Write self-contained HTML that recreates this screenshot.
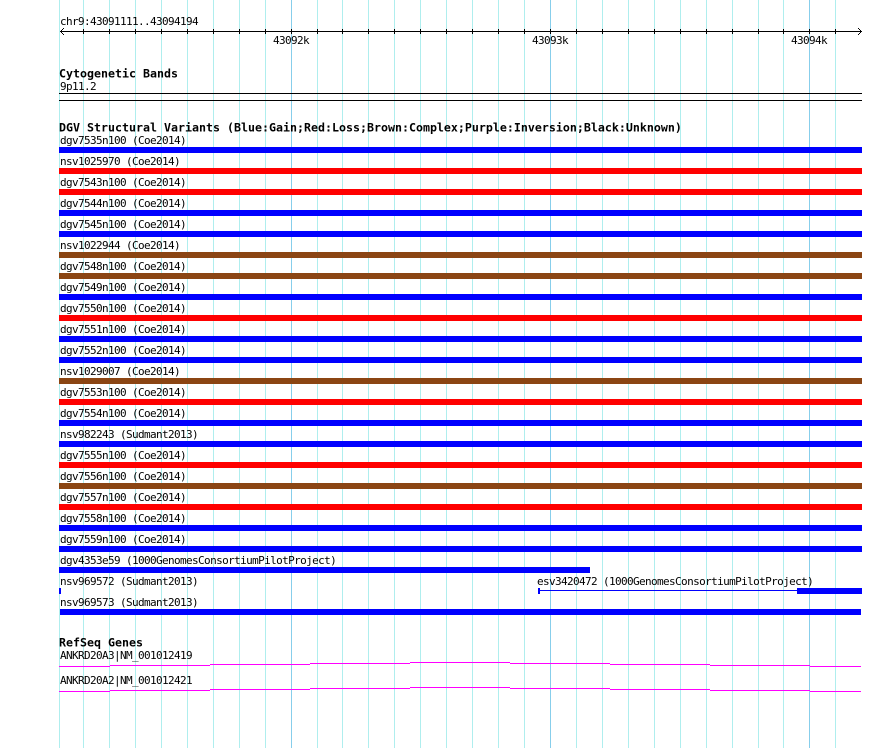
<!DOCTYPE html>
<html>
<head>
<meta charset="utf-8">
<style>
html,body{margin:0;padding:0;background:#fff;width:890px;height:748px;overflow:hidden}
svg{display:block}
text{font-family:"DejaVu Sans Mono","Liberation Mono",monospace;font-size:11px;letter-spacing:-0.62px;fill:#000;white-space:pre}
text.b{font-weight:bold;font-size:11.63px;letter-spacing:0}
</style>
</head>
<body>
<svg width="890" height="748" viewBox="0 0 890 748" xmlns="http://www.w3.org/2000/svg">
<g shape-rendering="crispEdges">
<g fill="#afeeee">
<rect x="59" y="0" width="1" height="748"/><rect x="83" y="0" width="1" height="748"/><rect x="109" y="0" width="1" height="748"/><rect x="135" y="0" width="1" height="748"/><rect x="161" y="0" width="1" height="748"/><rect x="187" y="0" width="1" height="748"/><rect x="213" y="0" width="1" height="748"/><rect x="239" y="0" width="1" height="748"/><rect x="265" y="0" width="1" height="748"/>
<rect x="317" y="0" width="1" height="748"/><rect x="342" y="0" width="1" height="748"/><rect x="368" y="0" width="1" height="748"/><rect x="394" y="0" width="1" height="748"/><rect x="420" y="0" width="1" height="748"/><rect x="446" y="0" width="1" height="748"/><rect x="472" y="0" width="1" height="748"/><rect x="498" y="0" width="1" height="748"/><rect x="524" y="0" width="1" height="748"/>
<rect x="576" y="0" width="1" height="748"/><rect x="602" y="0" width="1" height="748"/><rect x="628" y="0" width="1" height="748"/><rect x="654" y="0" width="1" height="748"/><rect x="680" y="0" width="1" height="748"/><rect x="706" y="0" width="1" height="748"/><rect x="732" y="0" width="1" height="748"/><rect x="758" y="0" width="1" height="748"/><rect x="783" y="0" width="1" height="748"/><rect x="835" y="0" width="1" height="748"/>
</g>
<g fill="#87ceeb">
<rect x="291" y="0" width="1" height="748"/><rect x="550" y="0" width="1" height="748"/><rect x="809" y="0" width="1" height="748"/>
</g>
<g fill="#000">
<rect x="60" y="31" width="802" height="1"/>
<rect x="83" y="29" width="1" height="5"/><rect x="109" y="29" width="1" height="5"/><rect x="135" y="29" width="1" height="5"/><rect x="161" y="29" width="1" height="5"/><rect x="187" y="29" width="1" height="5"/><rect x="213" y="29" width="1" height="5"/><rect x="239" y="29" width="1" height="5"/><rect x="265" y="29" width="1" height="5"/><rect x="291" y="29" width="1" height="5"/><rect x="317" y="29" width="1" height="5"/><rect x="342" y="29" width="1" height="5"/><rect x="368" y="29" width="1" height="5"/><rect x="394" y="29" width="1" height="5"/><rect x="420" y="29" width="1" height="5"/><rect x="446" y="29" width="1" height="5"/><rect x="472" y="29" width="1" height="5"/><rect x="498" y="29" width="1" height="5"/><rect x="524" y="29" width="1" height="5"/><rect x="550" y="29" width="1" height="5"/><rect x="576" y="29" width="1" height="5"/><rect x="602" y="29" width="1" height="5"/><rect x="628" y="29" width="1" height="5"/><rect x="654" y="29" width="1" height="5"/><rect x="680" y="29" width="1" height="5"/><rect x="706" y="29" width="1" height="5"/><rect x="732" y="29" width="1" height="5"/><rect x="758" y="29" width="1" height="5"/><rect x="783" y="29" width="1" height="5"/><rect x="809" y="29" width="1" height="5"/><rect x="835" y="29" width="1" height="5"/>
<rect x="59" y="93" width="803" height="1"/><rect x="59" y="100" width="803" height="1"/>
</g>
<!-- arrowheads -->
<g fill="#000">
<rect x="61" y="30" width="1" height="1"/><rect x="61" y="32" width="1" height="1"/><rect x="62" y="29" width="1" height="1"/><rect x="62" y="33" width="1" height="1"/><rect x="63" y="28" width="1" height="1"/><rect x="63" y="34" width="1" height="1"/>
<rect x="860" y="30" width="1" height="1"/><rect x="860" y="32" width="1" height="1"/><rect x="859" y="29" width="1" height="1"/><rect x="859" y="33" width="1" height="1"/><rect x="858" y="28" width="1" height="1"/><rect x="858" y="34" width="1" height="1"/>
</g>
<!-- bars -->
<g fill="#0000ff">
<rect x="59" y="147" width="803" height="6"/><rect x="59" y="210" width="803" height="6"/><rect x="59" y="231" width="803" height="6"/><rect x="59" y="294" width="803" height="6"/><rect x="59" y="336" width="803" height="6"/><rect x="59" y="357" width="803" height="6"/><rect x="59" y="420" width="803" height="6"/><rect x="59" y="441" width="803" height="6"/><rect x="59" y="525" width="803" height="6"/><rect x="59" y="546" width="803" height="6"/>
<rect x="59" y="567" width="531" height="6"/>
<rect x="59" y="588" width="2" height="6"/>
<rect x="538" y="588" width="2" height="6"/><rect x="540" y="590" width="257" height="1"/><rect x="797" y="588" width="65" height="6"/>
<rect x="60" y="609" width="801" height="6"/>
</g>
<g fill="#ff0000">
<rect x="59" y="168" width="803" height="6"/><rect x="59" y="189" width="803" height="6"/><rect x="59" y="315" width="803" height="6"/><rect x="59" y="399" width="803" height="6"/><rect x="59" y="462" width="803" height="6"/><rect x="59" y="504" width="803" height="6"/>
</g>
<g fill="#8b4513">
<rect x="59" y="252" width="803" height="6"/><rect x="59" y="273" width="803" height="6"/><rect x="59" y="378" width="803" height="6"/><rect x="59" y="483" width="803" height="6"/>
</g>
<!-- genes -->
<g fill="#ff00ff">
<rect x="59" y="666" width="51" height="1"/><rect x="110" y="665" width="100" height="1"/><rect x="210" y="664" width="100" height="1"/><rect x="310" y="663" width="100" height="1"/><rect x="410" y="662" width="100" height="1"/><rect x="510" y="663" width="100" height="1"/><rect x="610" y="664" width="100" height="1"/><rect x="710" y="665" width="100" height="1"/><rect x="810" y="666" width="51" height="1"/>
<rect x="59" y="691" width="51" height="1"/><rect x="110" y="690" width="100" height="1"/><rect x="210" y="689" width="100" height="1"/><rect x="310" y="688" width="100" height="1"/><rect x="410" y="687" width="100" height="1"/><rect x="510" y="688" width="100" height="1"/><rect x="610" y="689" width="100" height="1"/><rect x="710" y="690" width="100" height="1"/><rect x="810" y="691" width="51" height="1"/>
</g>
</g>
<text x="60" y="25">chr9:43091111..43094194</text>
<text x="273" y="44">43092k</text>
<text x="532" y="44">43093k</text>
<text x="791" y="44">43094k</text>
<text class="b" x="59" y="77.5">Cytogenetic Bands</text>
<text x="60" y="90">9p11.2</text>
<text class="b" x="59" y="131.5">DGV Structural Variants (Blue:Gain;Red:Loss;Brown:Complex;Purple:Inversion;Black:Unknown)</text>
<text x="60" y="144">dgv7535n100 (Coe2014)</text>
<text x="60" y="165">nsv1025970 (Coe2014)</text>
<text x="60" y="186">dgv7543n100 (Coe2014)</text>
<text x="60" y="207">dgv7544n100 (Coe2014)</text>
<text x="60" y="228">dgv7545n100 (Coe2014)</text>
<text x="60" y="249">nsv1022944 (Coe2014)</text>
<text x="60" y="270">dgv7548n100 (Coe2014)</text>
<text x="60" y="291">dgv7549n100 (Coe2014)</text>
<text x="60" y="312">dgv7550n100 (Coe2014)</text>
<text x="60" y="333">dgv7551n100 (Coe2014)</text>
<text x="60" y="354">dgv7552n100 (Coe2014)</text>
<text x="60" y="375">nsv1029007 (Coe2014)</text>
<text x="60" y="396">dgv7553n100 (Coe2014)</text>
<text x="60" y="417">dgv7554n100 (Coe2014)</text>
<text x="60" y="438">nsv982243 (Sudmant2013)</text>
<text x="60" y="459">dgv7555n100 (Coe2014)</text>
<text x="60" y="480">dgv7556n100 (Coe2014)</text>
<text x="60" y="501">dgv7557n100 (Coe2014)</text>
<text x="60" y="522">dgv7558n100 (Coe2014)</text>
<text x="60" y="543">dgv7559n100 (Coe2014)</text>
<text x="60" y="564">dgv4353e59 (1000GenomesConsortiumPilotProject)</text>
<text x="60" y="585">nsv969572 (Sudmant2013)</text>
<text x="537" y="585">esv3420472 (1000GenomesConsortiumPilotProject)</text>
<text x="60" y="606">nsv969573 (Sudmant2013)</text>
<text class="b" x="59" y="646.5">RefSeq Genes</text>
<text x="60" y="659">ANKRD20A3|NM_001012419</text>
<text x="60" y="684">ANKRD20A2|NM_001012421</text>
</svg>
</body>
</html>
